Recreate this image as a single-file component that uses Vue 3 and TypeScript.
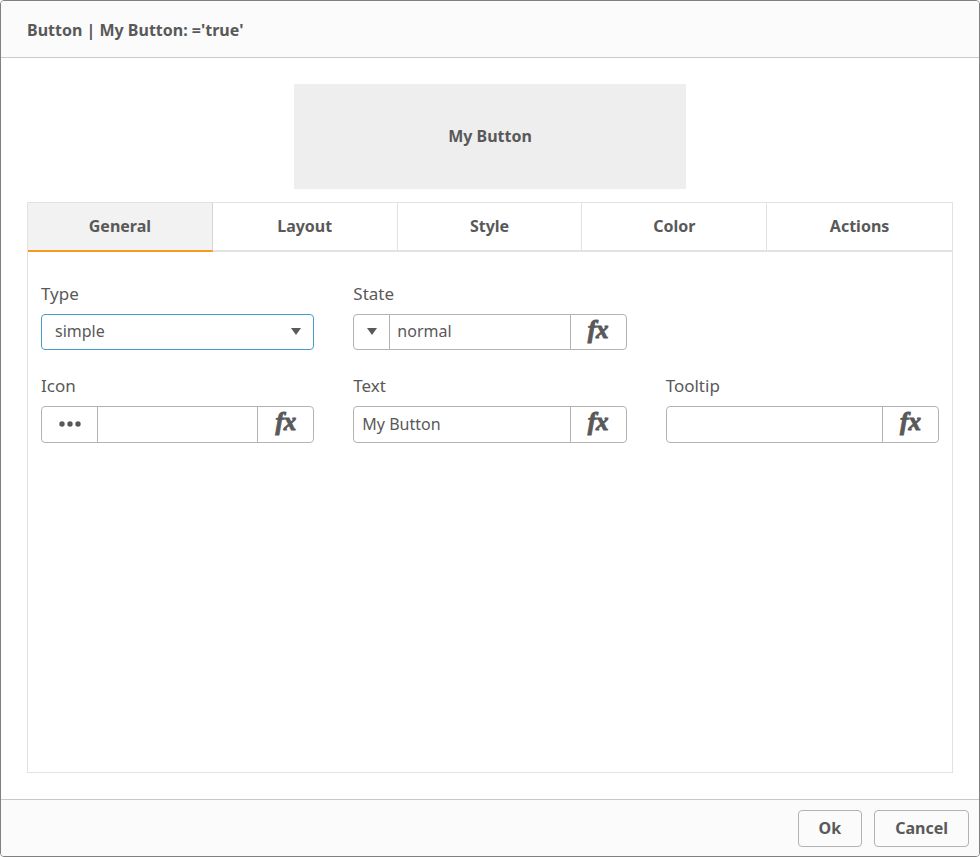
<script setup lang="ts">
import { computed, ref } from 'vue'

const tabs: string[] = ['General', 'Layout', 'Style', 'Color', 'Actions']
const activeTab = ref<string>('General')

const type = ref<string>('simple')
const state = ref<string>('normal')
const icon = ref<string>('')
const text = ref<string>('My Button')
const tooltip = ref<string>('')

const title = computed<string>(() => `Button | ${text.value}: ='true'`)
</script>

<template>
  <section class="dialog" role="dialog" aria-labelledby="dialog-title">
    <header class="dialog-header">
      <h1 id="dialog-title" class="dialog-title">{{ title }}</h1>
    </header>

    <main class="dialog-body">
      <button type="button" class="preview">{{ text }}</button>

      <div class="tabset">
        <div class="tabs" role="tablist">
          <button
            v-for="tab in tabs"
            :key="tab"
            type="button"
            role="tab"
            class="tab"
            :class="{ active: tab === activeTab }"
            :aria-selected="tab === activeTab"
            @click="activeTab = tab"
          >
            {{ tab }}
          </button>
        </div>

        <form v-if="activeTab === 'General'" class="fields" @submit.prevent>
          <div class="field">
            <label for="type">Type</label>
            <div class="group group-select focused">
              <select id="type" v-model="type" class="type-select">
                <option>simple</option>
                <option>advanced</option>
              </select>
              <svg class="select-arrow" viewBox="0 0 10 7" aria-hidden="true"><path d="M0 0h10L5 7z" /></svg>
            </div>
          </div>

          <div class="field">
            <label for="state">State</label>
            <div class="group group-select">
              <button type="button" class="addon addon-small" aria-label="Choose state">
                <svg class="arrow" viewBox="0 0 10 7" aria-hidden="true"><path d="M0 0h10L5 7z" /></svg>
              </button>
              <input id="state" v-model="state" class="value after-addon" type="text" />
              <button type="button" class="addon expression">fx</button>
            </div>
          </div>

          <div class="field row-start">
            <label for="icon">Icon</label>
            <div class="group">
              <button type="button" class="addon" aria-label="Choose icon">
                <svg class="dots" viewBox="0 0 22 6" aria-hidden="true">
                  <circle cx="3" cy="3" r="2.7" />
                  <circle cx="11" cy="3" r="2.7" />
                  <circle cx="19" cy="3" r="2.7" />
                </svg>
              </button>
              <input id="icon" v-model="icon" class="value after-addon" type="text" />
              <button type="button" class="addon expression">fx</button>
            </div>
          </div>

          <div class="field">
            <label for="text">Text</label>
            <div class="group">
              <input id="text" v-model="text" class="value" type="text" />
              <button type="button" class="addon expression">fx</button>
            </div>
          </div>

          <div class="field">
            <label for="tooltip">Tooltip</label>
            <div class="group">
              <input id="tooltip" v-model="tooltip" class="value" type="text" />
              <button type="button" class="addon expression">fx</button>
            </div>
          </div>
        </form>
      </div>
    </main>

    <footer class="dialog-footer">
      <button type="button" class="action">Ok</button>
      <button type="button" class="action">Cancel</button>
    </footer>
  </section>
</template>

<style>
body {
  background: #fff;
}
</style>

<style scoped>
.dialog,
.dialog * {
  box-sizing: border-box;
}

.dialog {
  display: flex;
  flex-direction: column;
  min-height: 100vh;
  border: 1px solid #808080;
  border-radius: 4px;
  overflow: hidden;
  background: #fff;
  color: #595959;
  font-family: "Noto Sans", "Open Sans", sans-serif;
  font-size: 16px;
  line-height: 24px;
}

button,
input,
select {
  margin: 0;
  padding: 0 0 2px;
  border: 0;
  border-radius: 0;
  outline: 0;
  background: none;
  color: inherit;
  font: inherit;
}

button {
  cursor: pointer;
}

.dialog-header {
  padding: 17px 26px 15px;
  border-bottom: 1px solid #c8c8c8;
  background: #fbfbfb;
}

.dialog-title {
  margin: 0;
  font-size: 16px;
  font-weight: 700;
  line-height: 24px;
}

.dialog-body {
  display: flex;
  flex: 1;
  flex-direction: column;
  align-items: center;
  padding: 26px;
}

.preview {
  width: 392px;
  height: 105px;
  background: #eee;
  font-weight: 700;
}

.tabset {
  display: flex;
  flex: 1;
  flex-direction: column;
  align-self: stretch;
  margin-top: 13px;
  border: 1px solid #e2e2e2;
}

.tabs {
  display: grid;
  grid-template-columns: repeat(5, 1fr);
}

.tab {
  height: 49px;
  border-right: 1px solid #e2e2e2;
  border-bottom: 2px solid #e2e2e2;
  font-weight: 700;
}

.tab:last-child {
  border-right: 0;
}

.tab.active {
  border-right-color: #d4d4d4;
  border-bottom-color: #f8981d;
  background: #f2f2f2;
}

.fields {
  display: grid;
  grid-template-columns: repeat(3, 1fr);
  gap: 24px 39px;
  padding: 30px 13px;
}

.row-start {
  grid-column-start: 1;
}

.field {
  display: flex;
  flex-direction: column;
  gap: 8px;
  min-width: 0;
}

.field label {
  font-size: 17px;
}

.group {
  position: relative;
  display: flex;
  height: 37px;
  border: 1px solid #b3b3b3;
  border-radius: 4px;
  background: #fff;
}

.group-select {
  height: 36px;
}

.focused {
  border-color: #469dcd;
}

.type-select {
  flex: 1;
  min-width: 0;
  padding: 0 13px 2px;
  appearance: none;
}

.select-arrow {
  position: absolute;
  top: 13px;
  right: 12px;
  width: 10px;
  height: 7px;
  fill: #595959;
  pointer-events: none;
}

.value {
  flex: 1;
  min-width: 0;
  padding: 0 8px 2px;
}

.after-addon {
  padding-left: 7px;
}

.addon {
  display: flex;
  align-items: center;
  justify-content: center;
  width: 56px;
  border-right: 1px solid #b3b3b3;
}

.addon-small {
  width: 36px;
}

.expression {
  padding-bottom: 5px;
  border-right: 0;
  border-left: 1px solid #b3b3b3;
  font-family: "Liberation Serif", serif;
  font-size: 25px;
  font-style: italic;
  font-weight: 700;
  -webkit-text-stroke: 1px currentColor;
}

.arrow {
  width: 10px;
  height: 7px;
  fill: #595959;
}

.dots {
  width: 22px;
  height: 6px;
  fill: #595959;
}

.dialog-footer {
  display: flex;
  justify-content: flex-end;
  gap: 12px;
  padding: 10px 10px 9px;
  border-top: 1px solid #c8c8c8;
  background: #fbfbfb;
}

.action {
  height: 37px;
  padding: 0 20px 2px;
  border: 1px solid #b3b3b3;
  border-radius: 4px;
  font-weight: 700;
}
</style>
